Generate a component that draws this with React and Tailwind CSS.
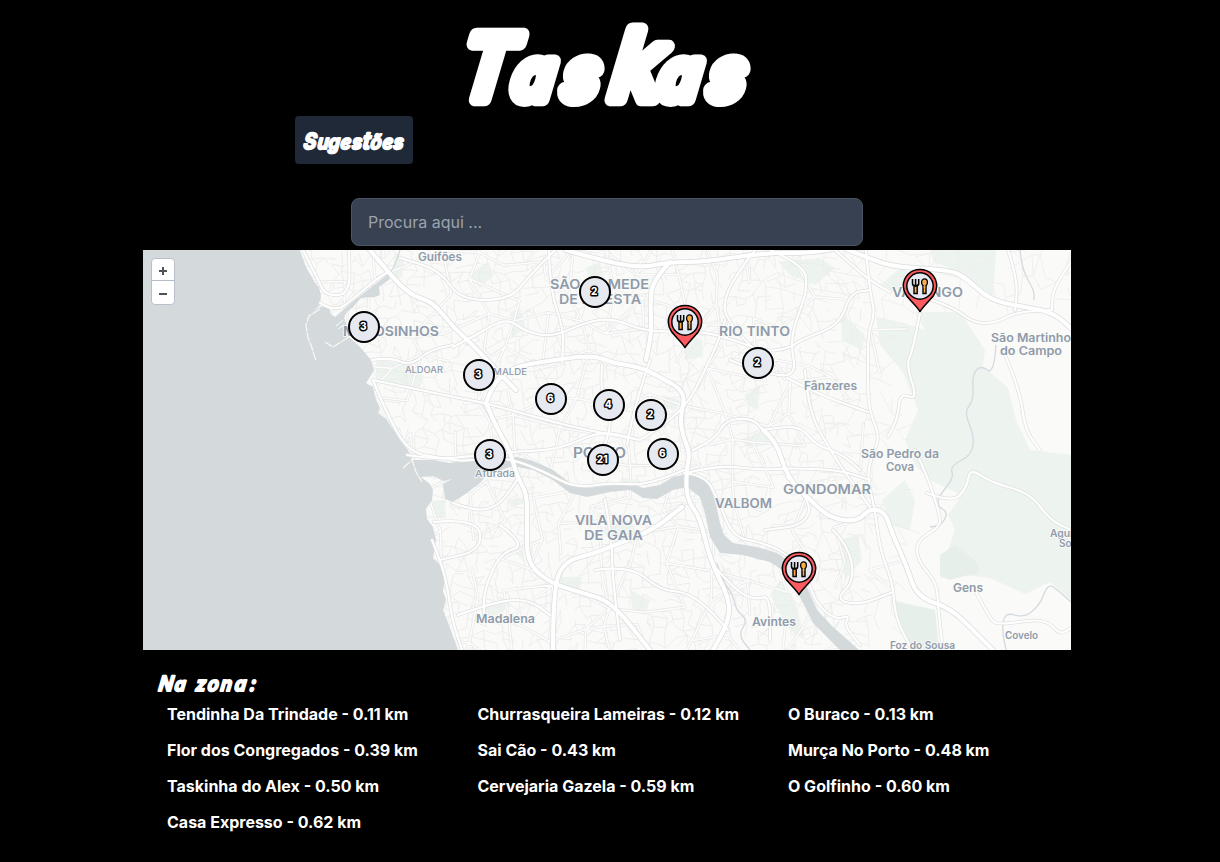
import React from 'react';

const WATER = '#d4dadc';

function rng(seed) {
  let s = seed;
  return () => {
    s = (s * 16807) % 2147483647;
    return s / 2147483647;
  };
}

// Irregular street mesh over the land part of the map.
function mesh(step, jitter, keep, seed, skip) {
  const rand = rng(seed);
  const cols = Math.ceil(800 / step) + 1;
  const rows = Math.ceil(420 / step) + 1;
  const pts = [];
  for (let r = 0; r < rows; r++) {
    const row = [];
    for (let c = 0; c < cols; c++) {
      row.push([
        295 + c * step + (rand() - 0.5) * jitter + r * step * 0.12,
        242 + r * step + (rand() - 0.5) * jitter - Math.sin(c / 4) * step * 0.6,
      ]);
    }
    pts.push(row);
  }
  let d = '';
  const edge = (a, b) => {
    if (skip(a[0], a[1])) return;
    d += `M${a[0].toFixed(1)} ${a[1].toFixed(1)}L${b[0].toFixed(1)} ${b[1].toFixed(1)}`;
  };
  for (let r = 0; r < rows; r++) {
    for (let c = 0; c < cols; c++) {
      if (c + 1 < cols && rand() < keep) edge(pts[r][c], pts[r][c + 1]);
      if (r + 1 < rows && rand() < keep) edge(pts[r][c], pts[r + 1][c]);
      if (r + 1 < rows && c > 0 && rand() < keep * 0.2) edge(pts[r][c], pts[r + 1][c - 1]);
    }
  }
  return d;
}

function smooth(str) {
  const p = str.split(' ').map((s) => s.split(',').map(Number));
  let d = `M${p[0][0]} ${p[0][1]}`;
  for (let i = 1; i < p.length - 1; i++) {
    const mx = (p[i][0] + p[i + 1][0]) / 2;
    const my = (p[i][1] + p[i + 1][1]) / 2;
    d += `Q${p[i][0]} ${p[i][1]} ${mx} ${my}`;
  }
  const l = p[p.length - 1];
  return d + `L${l[0]} ${l[1]}`;
}

const east = (x, y) => x > 905 && y > 300 + (x < 960 ? 10 : 0);
const FINE = mesh(9, 8, 0.55, 77, (x, y) => x > 870 || (x > 760 && (Math.floor(x / 24) + Math.floor(y / 24)) % 2 === 0));
const SPARSE = mesh(15, 14, 0.45, 411, (x, y) => x < 760 || east(x, y));
const STREETS = mesh(34, 26, 0.62, 1291, (x, y) => x > 880 || (x > 740 && (Math.floor(x / 60) + Math.floor(y / 60)) % 2 === 0));

const MAJOR = [
  '370,250 388,272 410,295 433,302 453,327 473,345 496,370 516,390',
  '486,403 493,383 513,367 553,360 593,355 613,363 640,367 660,377 686,392 680,417 683,437 690,452 686,473 687,500 700,517 710,560 730,600 728,623 713,650',
  '566,250 600,260 640,268 670,262 703,262 763,253 810,253 833,249',
  '846,249 873,260 896,267 950,270 966,278 990,300 1023,307 1053,312 1075,332',
  '670,262 653,280 650,303 652,330 646,360',
  '486,403 496,427 510,450 517,477 527,493 527,523 527,563 550,583 583,593 612,602 650,650',
  '553,650 553,583 567,560 590,555 615,545 653,530 682,507',
  '763,430 776,440 787,477 810,500 830,518 857,522 870,508 885,512 892,533 907,567 917,597 950,608 973,630 993,650',
];

const MID = [
  '453,347 473,337 506,317 526,332 553,337 586,322 613,318 646,332 700,331 735,340 765,352 790,348 800,340 840,325 850,293 870,290',
  '549,250 550,290 564,330 562,362',
  '866,250 870,293 875,313 868,333 868,383 869,410 880,437 872,455 867,477 875,510 880,550 893,583 895,617 912,650',
  '920,313 913,350 906,365 918,400 900,393 898,417 888,437',
  '1071,262 1053,287 1052,310',
  '926,298 953,307 973,323 996,323 1016,312 1052,310',
  '927,493 953,503 967,487 970,468 990,482 1030,493 1050,520 1071,530',
  '915,450 927,475 940,515 940,527 917,540 917,560 937,583 938,607 943,650',
  '373,380 453,397 486,403 546,420 586,430 640,440',
  '320,303 335,312 352,300 375,280 388,272',
  '303,250 318,280 326,296 350,294 349,251',
  '372,360 390,357 410,366 430,350 453,345',
  '373,380 385,410 408,452 440,458 470,462 500,452 560,450 600,430 640,440',
  '407,455 440,460 474,455 512,459 545,472 575,488 610,483 640,485 665,478 684,470',
  '434,522 478,518 482,550 440,560',
  '432,540 442,565 448,590 452,620 462,650',
  '453,503 477,512 500,505 517,480',
  '500,525 527,545 500,553 484,590 484,615',
  '458,615 500,600 530,600 550,615',
  '684,473 705,475 718,500 733,537 760,542 785,552 808,578 815,602 835,620 850,615 844,625 860,645',
  '690,472 720,465 760,470 790,468 840,470 870,480',
  '595,570 630,565 660,590 685,592 705,605 728,630',
  '605,500 612,540 612,570 620,640',
  '835,250 866,278 890,292',
  '770,250 805,265 807,290 800,310 790,340 797,378 760,372 730,360',
  '757,352 724,320 725,295 740,270 755,250',
  '787,378 820,395 868,412',
  '805,370 808,410 830,450 850,480 870,507',
  '1008,250 1018,280 1015,310',
  '1005,355 1020,390 1025,430 1040,450',
  '975,590 990,620 1000,625 1045,618 1060,635 1071,628',
  '640,440 665,425 690,400 700,380 717,345 725,320',
  '693,450 715,440 725,420 752,418 763,430',
  '860,470 845,455 815,445 800,425 763,430',
  '833,530 848,545 855,580 835,600 860,605 893,592',
  '555,250 530,275 510,300 460,300 440,270 400,258',
  '602,365 600,395 612,420 605,445',
  '650,360 640,390 632,420 627,445',
  '713,565 735,590 755,600 770,595 770,640',
  '787,477 812,500 805,525 765,530',
];

const GREENS = [
  'M930 250H996L993 296L975 283L955 270L934 262Z',
  'M876 317L900 322L925 330L915 312L960 312L985 350L983 366L1008 388L1016 420L1030 450L1071 455V600L1050 582L1025 594L990 578L958 574L941 578L948 550L955 530L948 515L962 495L930 480L915 465L905 440L918 410L903 372L880 345Z',
  'M893 600L935 610L940 650H915L898 625Z',
  'M376 360L406 364L424 376L420 388L392 384L376 380Z',
  'M395 252L404 258L402 277L393 280Z',
  'M840 312L865 335L862 350L842 340Z',
  'M778 262L820 258L835 268L815 285L790 275Z',
  'M690 335L702 340L703 357L684 360Z',
  'M468 275L488 262L494 275L480 288Z',
  'M510 312L520 308L526 327L512 338Z',
  'M508 500L524 497L525 503L511 507Z',
  'M432 502L445 500L446 518L435 518Z',
  'M515 547L523 545L524 560L513 552Z',
  'M560 577L582 577L580 590L558 588Z',
  'M480 610L502 598L512 605L492 618Z',
  'M745 395L760 385L758 410L748 405Z',
  'M640 480L620 485L622 478Z',
  'M740 440L764 430L770 444L750 448Z',
  'M882 500L905 480L915 500L910 530L890 525Z',
  'M780 580L795 600L805 640L790 630L770 595Z',
  'M838 540L858 535L862 560L845 580Z',
  'M720 560L735 590L725 580Z',
  'M900 268L925 280L905 295L880 285Z',
  'M600 530L630 520L640 540L618 545Z',
  'M662 395L680 400L676 410L664 408Z',
  'M630 590L650 600L645 615L632 608Z',
  'M585 268L600 262L603 275L590 280Z',
];

const LABELS = [
  ['Guifões', 418, 261, 44, 11.5],
  ['SÃO MAMEDE', 550, 289, 99, 13.5],
  ['DE INFESTA', 559, 304, 82, 13.5],
  ['MATOSINHOS', 343, 336, 96, 13.5],
  ['RIO TINTO', 719, 336, 71, 13.5],
  ['VALONGO', 892, 297, 71, 13.5],
  ['ALDOAR', 405, 373, 38, 9],
  ['RAMALDE', 480, 375, 47, 9],
  ['PORTO', 573, 458, 53, 14.5],
  ['Afurada', 475, 477, 40, 9.5],
  ['São Martinho', 991, 342, 80, 11.5],
  ['do Campo', 1000, 355, 62, 11.5],
  ['Fânzeres', 804, 390, 53, 11.5],
  ['São Pedro da', 861, 458, 78, 11.5],
  ['Cova', 886, 471, 28, 11.5],
  ['GONDOMAR', 783, 494, 88, 13.5],
  ['VALBOM', 715, 508, 57, 12.5],
  ['VILA NOVA', 575, 525, 77, 13.5],
  ['DE GAIA', 584, 540, 59, 13.5],
  ['Madalena', 476, 623, 59, 12],
  ['Avintes', 752, 626, 44, 12],
  ['Gens', 953, 592, 30, 12],
  ['Covelo', 1005, 639, 33, 10],
  ['Foz do Sousa', 890, 649, 65, 10.5],
  ['Aguiar de', 1050, 537, 48, 10],
  ['Sousa', 1059, 547, 30, 10],
];

const SEA =
  'M143 250H299.7L306 267L310 274L315 283L319 287L321 296L320 305L313 312L320 307L328 306L331 314L335 317L351 303L365 292L388 274L390 279L379 287L380 295L375 297L361 298L353 307L346 313L344 318L347 326L343 333L350 338L360 347L366 354L371 360L374 370L368 380L366 383L373 387L376 400L380 408L378 413L386 419L393 429L400 440L408 450L412 460L433 460L450 463L470 460L477 457L500 457L517 457L533 461L553 470L573 485L587 488L610 485L630 483L643 488L660 485L673 477L687 474L700 475L710 487L715 500L720 523L724 535L733 543L757 547L777 553L797 567L807 587L817 610L833 627L850 642L859 650H840L827 637L813 623L800 597L787 573L770 562L743 555L720 553L710 537L705 513L700 497L687 487L673 490L657 499L643 498L630 490L610 492L587 497L570 493L553 480L533 470L513 466L487 475L480 483L467 493L453 502L445 499L443 484L452 479L444 481L433 476L421 477L430 484L433 490L432 500L426 509L427 519L433 527L436 540L433 558L442 567L445 580L443 591L446 600L443 610L450 628L458 650H143Z';

function MapCanvas() {
  return (
    <svg className="block h-full w-full" viewBox="143 250 928 400" aria-hidden="true">
      <rect x="143" y="250" width="928" height="400" fill="#fafaf8" />
      <path d={GREENS.join('')} fill="#edf3ee" />
      <path d={FINE} stroke="#ececec" strokeWidth="0.9" fill="none" />
      <path d={SPARSE} stroke="#eeeeec" strokeWidth="0.9" fill="none" />
      <path d="M940 555L955 545L975 560L980 572L950 580L940 576ZM895 602L935 610L938 650H915L898 625Z" fill="#e7efeb" />
      <path d={STREETS} stroke="#e5e5e5" strokeWidth="2.8" strokeLinecap="round" fill="none" />
      <path d={STREETS} stroke="#fdfdfd" strokeWidth="1.6" strokeLinecap="round" fill="none" />
      <path d={SEA} fill={WATER} />
      <path d="M320 309L309 316L306 325L308 338L312 348L316 361M349 337L333 347L325 342M403 468L412 460L416 472L422 482" stroke="#f7f7f4" strokeWidth="1.3" strokeDasharray="9 1" fill="none" />
      <path d="M336 326L343 320M338 329L344 325" stroke="#fafaf8" strokeWidth="1" />
      <path
        d={
          smooth('1020,250 1022,270 1034,290 1034,300') +
          smooth('996,345 994,375 981,365 972,375 974,400 964,412 974,435 972,455 950,466 954,478 938,497 938,507 948,512 942,525 930,527') +
          smooth('1071,602 1060,592 1048,583 1040,605 1024,618 1005,612 1002,630 1006,650') +
          smooth('717,563 722,580 733,595 736,610 748,620 738,635 750,650') +
          smooth('400,250 394,270 380,283')
        }
        stroke="#d4dadf"
        strokeWidth="1.3"
        fill="none"
      />
      {MID.map((m) => (
        <path key={m} d={smooth(m)} stroke="#dfe0e0" strokeWidth="3.6" strokeLinecap="round" fill="none" />
      ))}
      {MAJOR.map((m) => (
        <path key={m} d={smooth(m)} stroke="#dadbdc" strokeWidth="5.6" strokeLinecap="round" fill="none" />
      ))}
      {MID.map((m) => (
        <path key={m + 'f'} d={smooth(m)} stroke="#ffffff" strokeWidth="2.2" strokeLinecap="round" fill="none" />
      ))}
      {MAJOR.map((m) => (
        <path key={m + 'f'} d={smooth(m)} stroke="#ffffff" strokeWidth="4.2" strokeLinecap="round" fill="none" />
      ))}
      <g fill="#8f9bab" stroke="#fafaf8" strokeWidth="2" strokeLinejoin="round" strokeOpacity="0.85" paintOrder="stroke" fontFamily="Inter, 'Open Sans', sans-serif" fontWeight="600">
        {LABELS.map(([t, x, y, w, s]) => (
          <text key={t} x={x} y={y} textLength={w} lengthAdjust="spacingAndGlyphs" fontSize={s} fontWeight={s < 10 ? 500 : 600}>
            {t}
          </text>
        ))}
      </g>
    </svg>
  );
}

const CLUSTERS = [
  ['3', 364, 327],
  ['2', 595, 292],
  ['2', 758, 363],
  ['3', 479, 375],
  ['6', 551, 399],
  ['4', 609, 405],
  ['2', 651, 415],
  ['3', 490, 455],
  ['21', 603, 460],
  ['6', 663, 454],
];

function Cluster({ n, x, y }) {
  return (
    <div
      className="absolute flex h-8 w-8 items-center justify-center rounded-full border-2 border-black bg-[#e6e9ef]"
      style={{ left: x - 159, top: y - 266 }}
    >
      <svg width="24" height="20" viewBox="0 0 24 20">
        <text
          x="11.2"
          y="13.3"
          textAnchor="middle"
          fontFamily="Inter, sans-serif"
          fontWeight="800"
          fontSize="10"
          fill="#fff"
          stroke="#000"
          strokeWidth="2.8"
          strokeLinejoin="round"
          paintOrder="stroke"
        >
          {n}
        </text>
      </svg>
    </div>
  );
}

function Pin({ x, y }) {
  return (
    <svg className="absolute" style={{ left: x - 161, top: y - 294 }} width="36" height="45" viewBox="0 0 36 45">
      <path
        d="M18 43.5C14.5 38 8.5 33 4.5 27.5C2.5 24.5 1.3 21.5 1.3 18C1.3 8.5 8.5 1.5 18 1.5S34.7 8.5 34.7 18C34.7 21.5 33.5 24.5 31.5 27.5C27.5 33 21.5 38 18 43.5Z"
        fill="#fb5a5f"
        stroke="#000"
        strokeWidth="1.5"
        strokeLinejoin="round"
      />
      <circle cx="18" cy="18" r="13.2" fill="#e6e9f2" stroke="#000" strokeWidth="1.5" />
      <path d="M12 17.5H15.2V25.5H12Z" fill="#f8ad4b" stroke="#000" strokeWidth="1.4" />
      <path d="M10.500 11V15.500Q10.500 18 13.600 18T16.700 15.500V11M13.600 11V17.500" fill="none" stroke="#000" strokeWidth="1.5" />
      <path d="M21 17H24V25.500H21Z" fill="#f8ad4b" stroke="#000" strokeWidth="1.4" />
      <ellipse cx="22.500" cy="14.300" rx="2.900" ry="3.500" fill="#f8ad4b" stroke="#000" strokeWidth="1.3" />
      <path d="M21.700 16H23.300V20H21.700Z" fill="#f8ad4b" />
    </svg>
  );
}

// Slanted brush lettering: each glyph is [character, x, font size] on a shared baseline.
function Brush({ glyphs, width, height, baseline, stroke, weight, scale, skew, label }) {
  return (
    <svg className="block overflow-visible" width={width} height={height} viewBox={`0 0 ${width} ${height}`} role="img" aria-label={label}>
      <text
        transform={`translate(0 ${baseline}) skewX(${-skew}) scale(${scale} 1)`}
        fontFamily="Inter, sans-serif"
        fontWeight={weight}
        fontStyle="italic"
        fill="#fff"
        stroke="#fff"
        strokeWidth={stroke}
        strokeLinejoin="round"
        strokeLinecap="round"
        style={{ fontFeatureSettings: '"cv11"' }}
      >
        {glyphs.map(([c, x, size], i) => (
          <tspan key={i} x={x / scale} y={0} fontSize={size}>
            {c}
          </tspan>
        ))}
      </text>
    </svg>
  );
}

const TITLE = [
  ['T', -9, 88],
  ['a', 45, 68],
  ['s', 95, 69],
  ['k', 143, 95],
  ['a', 191, 68],
  ['s', 241, 69],
];

const SUGGEST = [
  ['S', 8, 22],
  ['u', 22, 20],
  ['g', 33, 20],
  ['e', 45, 20],
  ['s', 56.5, 20],
  ['t', 67, 24],
  ['õ', 75, 20],
  ['e', 87, 20],
  ['s', 98, 20],
];

const NEAR = [
  ['N', 1, 21],
  ['a', 17, 19],
  ['z', 38, 20],
  ['o', 50, 20],
  ['n', 63, 20],
  ['a', 77, 20],
  [':', 92, 21],
];

const PLACES = [
  'Tendinha Da Trindade - 0.11 km',
  'Churrasqueira Lameiras - 0.12 km',
  'O Buraco - 0.13 km',
  'Flor dos Congregados - 0.39 km',
  'Sai Cão - 0.43 km',
  'Murça No Porto - 0.48 km',
  'Taskinha do Alex - 0.50 km',
  'Cervejaria Gazela - 0.59 km',
  'O Golfinho - 0.60 km',
  'Casa Expresso - 0.62 km',
];

export default function App() {
  return (
    <div className="h-[862px] overflow-hidden bg-black pr-[6px] font-['Inter',sans-serif] text-white">
      <div className="mx-auto flex w-[928px] flex-col">
        <h1 className="flex h-[116px] justify-center">
          <Brush glyphs={TITLE} width={282} height={116} baseline={99} stroke={14.5} weight={500} scale={0.94} skew={8} label="Taskas" />
        </h1>
        <div className="flex pl-[152px]">
          <button className="h-12 w-[118px] rounded bg-[#1f2937]">
            <Brush glyphs={SUGGEST} width={118} height={48} baseline={32.5} stroke={2} weight={700} scale={0.9} skew={6} label="Sugestões" />
          </button>
        </div>
        <div className="mt-[34px] flex justify-center">
          <input
            className="h-12 w-[512px] rounded-lg border border-[#4b5563] bg-[#374151] px-4 text-base text-white placeholder-[#9ca3af] outline-none"
            placeholder="Procura aqui ..."
          />
        </div>
        <div className="relative mt-1 h-[400px] w-full overflow-hidden">
          <MapCanvas />
          {CLUSTERS.map(([n, x, y]) => (
            <Cluster key={`${x}-${y}`} n={n} x={x} y={y} />
          ))}
          <Pin x={685} y={348.4} />
          <Pin x={920} y={312.4} />
          <Pin x={799} y={595.4} />
          <div className="absolute left-2 top-2 flex w-6 flex-col divide-y divide-[#b5bcc8] overflow-hidden rounded-sm border border-[#b9c0ca] bg-white text-[#4f5358]">
            <button className="flex h-[22px] items-center justify-center pt-0.5" aria-label="Zoom in">
              <svg width="10" height="10" viewBox="0 0 10 10" stroke="currentColor" strokeWidth="2">
                <path d="M5 1V9M1 5H9" />
              </svg>
            </button>
            <button className="flex h-[23px] items-center justify-center pt-0.5" aria-label="Zoom out">
              <svg width="10" height="10" viewBox="0 0 10 10" stroke="currentColor" strokeWidth="2">
                <path d="M1 5H9" />
              </svg>
            </button>
          </div>
        </div>
        <h2 className="mt-[15px] h-[37px] pl-[14px]">
          <Brush glyphs={NEAR} width={110} height={37} baseline={26} stroke={2} weight={750} scale={0.9} skew={8} label="Na zona:" />
        </h2>
        <ul className="grid grid-cols-[310.5px_310.5px_1fr] gap-y-3 pl-6 text-base font-bold leading-6">
          {PLACES.map((p) => (
            <li key={p} className="whitespace-nowrap">
              {p}
            </li>
          ))}
        </ul>
      </div>
    </div>
  );
}
